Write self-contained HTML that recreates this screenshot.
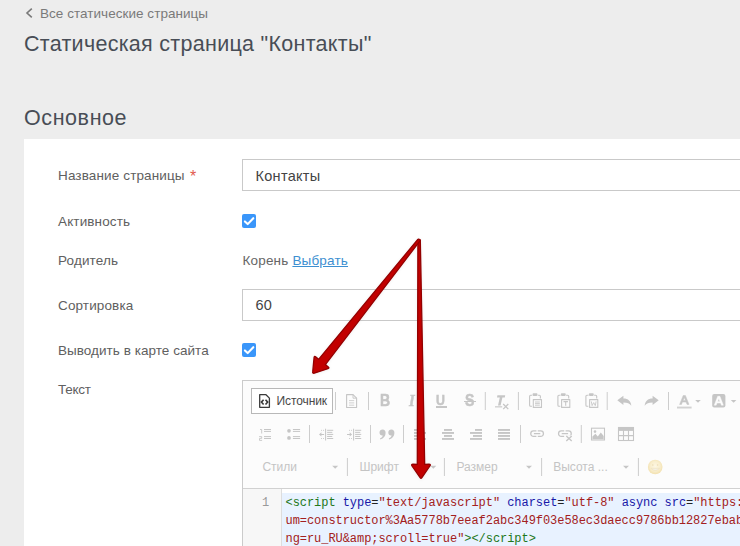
<!DOCTYPE html>
<html lang="ru">
<head>
<meta charset="utf-8">
<title>Статическая страница "Контакты"</title>
<style>
*{box-sizing:border-box;margin:0;padding:0}
html,body{width:740px;height:546px;overflow:hidden;background:#ededed;font-family:"Liberation Sans",sans-serif;color:#555}
.abs{position:absolute;white-space:nowrap}
#back{left:40px;top:6px;font-size:13.5px;line-height:16px;color:#7a7a7a;letter-spacing:.04px}
#h1{left:24px;top:31px;font-size:21.5px;line-height:26px;color:#484d56;letter-spacing:.29px}
#h2{left:24px;top:105px;font-size:21.5px;line-height:26px;color:#484d56;letter-spacing:.58px}
#panel{left:24px;top:139px;width:716px;height:407px;background:#fff}
.lbl{left:58px;font-size:13.5px;line-height:18px;color:#606060;letter-spacing:.13px;margin-top:1px}
.inp{left:242px;width:520px;height:32px;border:1px solid #c9c9c9;background:#fff}
.inp span{position:absolute;left:12.5px;top:7px;font-size:14.5px;line-height:18px;color:#444;letter-spacing:.29px}
.cb{left:242px;width:14px;height:14px;border-radius:2px;background:#3a96fa}
.cb svg{position:absolute;left:0;top:0}
#editor{left:242px;top:380px;width:520px;height:180px;border:1px solid #cbcbcb;background:#fcfcfc}
#tb{left:243px;top:381px;width:500px;height:107px;background:#fcfcfc}
#tbline{left:243px;top:488px;width:500px;height:1px;background:#d1d1d1}
#srcbtn{left:251px;top:388px;width:82px;height:26px;border:1px solid #b8b8b8;background:#fff}
#srctxt{left:276.5px;top:394px;font-size:12px;line-height:14px;color:#484848;letter-spacing:-.1px}
.tbt{font-size:16px;line-height:16px;font-weight:bold;color:#c6c6c6;-webkit-text-stroke:.5px #c6c6c6;transform:scaleX(.88);transform-origin:0 0}
.cmb{font-size:12px;line-height:16px;color:#c4c4c4;top:459px}
#gutter{left:243px;top:489px;width:39px;height:60px;background:#f7f7f7;border-right:1px solid #ddd}
#codew{left:282px;top:489px;width:460px;height:4px;background:#fff}
#code{left:282px;top:493px;width:460px;height:60px;background:#e8f2ff}
.ln{font-family:"Liberation Mono",monospace;font-size:12px;line-height:18px;color:#999}
.cl{font-family:"Liberation Mono",monospace;font-size:12px;letter-spacing:-.05px;line-height:18px;color:#a32020;left:285.5px}
.tg{color:#22771a}.at{color:#1818a8}.st{color:#a32020}.eq{color:#222}
#ov{left:0;top:0}
</style>
</head>
<body>
<div class="abs" id="back">Все статические страницы</div>
<svg class="abs" style="left:24px;top:7px" width="12" height="12" viewBox="0 0 12 12"><path d="M7.8 1.6 L3 6 L7.8 10.4" fill="none" stroke="#7a7a7a" stroke-width="1.6"/></svg>
<div class="abs" id="h1">Статическая страница "Контакты"</div>
<div class="abs" id="h2">Основное</div>

<div class="abs" id="panel"></div>

<div class="abs lbl" style="top:166px">Название страницы <span style="color:#e25a4e;font-size:16px;line-height:10px;position:relative;top:1.5px;left:1.5px">*</span></div>
<div class="abs inp" style="top:159px"><span>Контакты</span></div>

<div class="abs lbl" style="top:212px">Активность</div>
<div class="abs cb" style="top:214px"><svg width="14" height="14" viewBox="0 0 14 14"><path d="M2.9 7.4 L5.7 10.1 L11.3 4.2" fill="none" stroke="#fff" stroke-width="2.1" stroke-linecap="round" stroke-linejoin="round"/></svg></div>

<div class="abs lbl" style="top:251px">Родитель</div>
<div class="abs lbl" style="left:242.5px;top:251px;color:#666;letter-spacing:.18px">Корень <span style="color:#3d8fd1;text-decoration:underline">Выбрать</span></div>

<div class="abs lbl" style="top:296px">Сортировка</div>
<div class="abs inp" style="top:289px"><span style="top:6px">60</span></div>

<div class="abs lbl" style="top:341px;letter-spacing:.04px">Выводить в карте сайта</div>
<div class="abs cb" style="top:343px"><svg width="14" height="14" viewBox="0 0 14 14"><path d="M2.9 7.4 L5.7 10.1 L11.3 4.2" fill="none" stroke="#fff" stroke-width="2.1" stroke-linecap="round" stroke-linejoin="round"/></svg></div>

<div class="abs lbl" style="top:380px;letter-spacing:-.25px">Текст</div>

<div class="abs" id="editor"></div>
<div class="abs" id="tb"></div>
<div class="abs" id="tbline"></div>
<div class="abs" id="srcbtn"></div>
<div class="abs" id="srctxt">Источник</div>

<div class="abs tbt" style="left:380.2px;top:392.6px">B</div>
<div class="abs tbt" style="left:409.2px;top:392.6px;font-style:italic;font-family:'Liberation Serif',serif;font-size:16.5px">I</div>
<div class="abs tbt" style="left:436px;top:392.3px;font-size:14px">U</div>
<div class="abs" style="left:436.2px;top:406.4px;width:10.6px;height:1.2px;background:#c6c6c6"></div>
<div class="abs tbt" style="left:464.6px;top:392.6px">S</div>
<div class="abs" style="left:463.6px;top:400.6px;width:12.4px;height:1.2px;background:#c6c6c6"></div>

<div class="abs cmb" style="left:262.4px">Стили</div>
<div class="abs cmb" style="left:359.4px">Шрифт</div>
<div class="abs cmb" style="left:456.4px">Размер</div>
<div class="abs cmb" style="left:553.2px">Высота ...</div>

<div class="abs" id="gutter"></div>
<div class="abs" id="codew"></div>
<div class="abs" id="code"></div>
<div class="abs ln" style="left:262px;top:494px">1</div>
<div class="abs cl" style="top:494px"><span class="tg">&lt;script</span> <span class="at">type</span><span class="eq">=</span><span class="st">"text/javascript"</span> <span class="at">charset</span><span class="eq">=</span><span class="st">"utf-8"</span> <span class="at">async</span> <span class="at">src</span><span class="eq">=</span><span class="st">"htt<i></i>ps:</span></div>
<div class="abs cl" style="top:512px">um=constructor%3Aa5778b7eeaf2abc349f03e58ec3daecc9786bb12827ebab1c2d3e4f5a6b7c8d9</div>
<div class="abs cl" style="top:530px">ng=ru_RU&amp;amp;scroll=true"<span class="tg">&gt;&lt;/script&gt;</span></div>

<svg class="abs" id="ov" width="740" height="546" viewBox="0 0 740 546">
<defs><radialGradient id="sm" cx="50%" cy="45%" r="55%"><stop offset="0" stop-color="#fdf7e4"/><stop offset="0.6" stop-color="#f9eecd"/><stop offset="1" stop-color="#f2e0ae"/></radialGradient><filter id="sh" x="-20%" y="-20%" width="140%" height="140%"><feDropShadow dx="0" dy="0.5" stdDeviation="1.6" flood-color="#000" flood-opacity="0.07"/></filter></defs>
<g fill="none" stroke="#3a3a3a" stroke-width="1.3" stroke-linejoin="round">
<path d="M259.7 394.7 H266 L269.4 398.1 V407.3 H259.7 Z"/>
<path d="M263.6 399.7 L261.4 402.1 L263.6 404.5 M265.5 399.7 L267.7 402.1 L265.5 404.5" stroke-width="1.6" stroke-linejoin="miter"/></g>
<rect x="335.0" y="392" width="1" height="18" fill="#cdcdcd"/>
<rect x="368.0" y="392" width="1" height="18" fill="#cdcdcd"/>
<rect x="484.8" y="392" width="1" height="18" fill="#cdcdcd"/>
<rect x="517.9" y="392" width="1" height="18" fill="#cdcdcd"/>
<rect x="606.7" y="392" width="1" height="18" fill="#cdcdcd"/>
<rect x="668.0" y="392" width="1" height="18" fill="#cdcdcd"/>
<g fill="none" stroke="#c6c6c6" stroke-width="1.1" stroke-linejoin="round">
<path d="M346.6 394.6 H353 L356.6 398.2 V407.5 H346.6 Z"/><path d="M353 394.6 V398.2 H356.6" stroke-width="0.9"/>
<path d="M349 400.6 H354.2 M349 402.9 H354.2 M349 405.2 H354.2" stroke-width="0.8"/></g>
<g fill="#c6c6c6"><path d="M497.4 395.3 H505.2 L504.8 397.4 H502.4 L500.6 405.6 H498 L499.8 397.4 H497 Z"/>
<rect x="495" y="406.3" width="7.2" height="1.1"/>
<path d="M503.2 404 L508.3 409.1 M508.3 404 L503.2 409.1" stroke="#c6c6c6" stroke-width="1.3" fill="none"/></g>
<g fill="none" stroke="#c6c6c6" stroke-width="1.1" stroke-linejoin="round"><path d="M532 406.2 H530.6 Q529.6 406.2 529.6 405.2 V396.2 Q529.6 395.2 530.6 395.2 H532.2 M537.8 395.2 H539.4 Q540.4 395.2 540.4 396.2 V398.4"/><rect x="532.6" y="393.3" width="4.8" height="2.6" rx="0.8" fill="#c6c6c6" stroke="none"/><rect x="533.3" y="399.6" width="8.2" height="7.8"/><path d="M535 402 H539.8 M535 403.6 H539.8 M535 405.2 H539.8" stroke-width="0.9"/></g>
<g fill="none" stroke="#c6c6c6" stroke-width="1.1" stroke-linejoin="round"><path d="M560.3 406.2 H558.9 Q557.9 406.2 557.9 405.2 V396.2 Q557.9 395.2 558.9 395.2 H560.5 M566.0999999999999 395.2 H567.6999999999999 Q568.6999999999999 395.2 568.6999999999999 396.2 V398.4"/><rect x="560.9" y="393.3" width="4.8" height="2.6" rx="0.8" fill="#c6c6c6" stroke="none"/><rect x="561.5999999999999" y="399.6" width="8.2" height="7.8"/><path d="M563.5 401.6 H567.9 M565.6999999999999 401.6 V405.8" stroke-width="1.1"/></g>
<g fill="none" stroke="#c6c6c6" stroke-width="1.1" stroke-linejoin="round"><path d="M588.3 406.2 H586.9 Q585.9 406.2 585.9 405.2 V396.2 Q585.9 395.2 586.9 395.2 H588.5 M594.0999999999999 395.2 H595.6999999999999 Q596.6999999999999 395.2 596.6999999999999 396.2 V398.4"/><rect x="588.9" y="393.3" width="4.8" height="2.6" rx="0.8" fill="#c6c6c6" stroke="none"/><rect x="589.5999999999999" y="399.6" width="8.2" height="7.8"/><path d="M591.3 401.4 L592.0999999999999 405.6 L593.6999999999999 402.6 L595.3 405.6 L596.0999999999999 401.4" stroke-width="0.9"/></g>
<path fill="#c6c6c6" d="M617.3 400.3 L623.4 395.8 V398.6 C628.2 398.6 631 401.2 631.3 405.8 C629.6 403.4 627.4 402.4 623.4 402.4 V405 Z"/>
<path fill="#c6c6c6" d="M658.7 400.3 L652.6 395.8 V398.6 C647.8 398.6 645 401.2 644.7 405.8 C646.4 403.4 648.6 402.4 652.6 402.4 V405 Z"/>
<path fill="#c6c6c6" stroke="#c6c6c6" stroke-width="0.5" stroke-linejoin="round" d="M683.2 395.5 H685.4 L689 404.4 H687 L686.1 402.1 H682.4 L681.5 404.4 H679.6 Z M684.3 397.6 L683.1 400.5 H685.5 Z"/><rect x="677" y="406.6" width="14.6" height="1.9" fill="#d2d2d2"/>
<path fill="#c6c6c6" d="M695.2 399.9 H700.8 L698 402.8 Z"/>
<rect x="712.2" y="394" width="13.2" height="13.6" rx="2" fill="#c6c6c6"/><path fill="#fcfcfc" stroke="#fcfcfc" stroke-width="0.4" stroke-linejoin="round" d="M717.7 396.3 H719.9 L723.4 405.2 H721.4 L720.6 403.1 H717 L716.2 405.2 H714.2 Z M718.8 398.6 L717.7 401.4 H719.9 Z"/>
<path fill="#c6c6c6" d="M730.8 399.9 H736.4 L733.6 402.8 Z"/>
<rect x="309.0" y="425" width="1" height="18" fill="#cdcdcd"/>
<rect x="370.0" y="425" width="1" height="18" fill="#cdcdcd"/>
<rect x="403.0" y="425" width="1" height="18" fill="#cdcdcd"/>
<rect x="520.0" y="425" width="1" height="18" fill="#cdcdcd"/>
<rect x="580.8" y="425" width="1" height="18" fill="#cdcdcd"/>
<g fill="#c6c6c6"><rect x="264" y="429" width="7" height="1"/><rect x="264" y="430.9" width="7" height="1"/><rect x="264" y="436.1" width="7" height="1"/><rect x="264" y="438" width="7" height="1"/></g>
<g fill="none" stroke="#c6c6c6" stroke-width="0.9"><path d="M260 429.5 H261.7 V433.5"/>
<path d="M259.1 436.6 H261.7 V438.4 H259.5 V440.4 H262.1"/></g>
<g fill="#c6c6c6"><circle cx="289" cy="430.8" r="1.85"/><circle cx="289" cy="437.9" r="1.85"/>
<rect x="292.9" y="429" width="7.2" height="1"/><rect x="292.9" y="430.9" width="7.2" height="1"/><rect x="292.9" y="436.1" width="7.2" height="1"/><rect x="292.9" y="438" width="7.2" height="1"/></g>
<g fill="#c6c6c6"><rect x="327.10" y="429.80" width="6.1" height="1"/><rect x="327.10" y="431.85" width="5.2" height="1"/><rect x="327.10" y="433.90" width="6.1" height="1"/><rect x="327.10" y="435.95" width="5.2" height="1"/><rect x="327.10" y="438.00" width="6.1" height="1"/><rect x="325.10" y="428.7" width="1" height="11.8"/><rect x="321.10" y="429.85" width="0.9" height="0.9"/><rect x="323.00" y="429.85" width="0.9" height="0.9"/><rect x="321.10" y="438.05" width="0.9" height="0.9"/><rect x="323.00" y="438.05" width="0.9" height="0.9"/><path d="M319.00 434.4 L321.40 432.3 V433.9 H324.10 V434.9 H321.40 V436.5 Z"/></g>
<g fill="#c6c6c6"><rect x="355.10" y="429.80" width="6.1" height="1"/><rect x="355.10" y="431.85" width="5.2" height="1"/><rect x="355.10" y="433.90" width="6.1" height="1"/><rect x="355.10" y="435.95" width="5.2" height="1"/><rect x="355.10" y="438.00" width="6.1" height="1"/><rect x="353.10" y="428.7" width="1" height="11.8"/><rect x="349.10" y="429.85" width="0.9" height="0.9"/><rect x="351.00" y="429.85" width="0.9" height="0.9"/><rect x="349.10" y="438.05" width="0.9" height="0.9"/><rect x="351.00" y="438.05" width="0.9" height="0.9"/><path d="M352.10 434.4 L349.70 432.3 V433.9 H347.00 V434.9 H349.70 V436.5 Z"/></g>
<path fill="#c6c6c6" d="M382.60 429.5 C384.60 429.5 385.60 431 385.60 433 C385.60 436 383.60 438.5 380.40 439.4 L380.00 438.4 C381.60 437.7 382.60 436.7 382.80 435.5 C382.60 435.6 382.40 435.6 382.20 435.6 C380.60 435.6 379.50 434.3 379.50 432.6 C379.50 430.8 380.80 429.5 382.60 429.5 Z"/>
<path fill="#c6c6c6" d="M391.40 429.5 C393.40 429.5 394.40 431 394.40 433 C394.40 436 392.40 438.5 389.20 439.4 L388.80 438.4 C390.40 437.7 391.40 436.7 391.60 435.5 C391.40 435.6 391.20 435.6 391.00 435.6 C389.40 435.6 388.30 434.3 388.30 432.6 C388.30 430.8 389.60 429.5 391.40 429.5 Z"/>
<g fill="#c6c6c6"><rect x="414" y="429" width="7" height="1.9"/><rect x="414" y="432" width="12" height="1.9"/><rect x="414" y="435" width="9" height="1.9"/><rect x="414" y="438" width="12" height="1.9"/></g>
<g fill="#c6c6c6"><rect x="444.0" y="429" width="8" height="1.9"/><rect x="442.0" y="432" width="12" height="1.9"/><rect x="444.0" y="435" width="8" height="1.9"/><rect x="442.0" y="438" width="12" height="1.9"/></g>
<g fill="#c6c6c6"><rect x="475" y="429" width="7" height="1.9"/><rect x="470" y="432" width="12" height="1.9"/><rect x="473" y="435" width="9" height="1.9"/><rect x="470" y="438" width="12" height="1.9"/></g>
<g fill="#c6c6c6"><rect x="498" y="429" width="12" height="1.9"/><rect x="498" y="432" width="12" height="1.9"/><rect x="498" y="435" width="12" height="1.9"/><rect x="498" y="438" width="12" height="1.9"/></g>
<g fill="none" stroke="#c6c6c6" stroke-width="1.3"><path d="M536.40 430.9 H533.50 A2.75 2.75 0 0 0 533.50 436.4 H536.40 M537.80 430.9 H540.70 A2.75 2.75 0 0 1 540.70 436.4 H537.80 M533.90 433.65 H540.30"/></g>
<g fill="none" stroke="#c6c6c6" stroke-width="1.3"><path d="M564.20 430.9 H561.30 A2.75 2.75 0 0 0 561.30 436.4 H564.20 M565.60 430.9 H568.50 A2.75 2.75 0 0 1 568.50 436.4 H565.60 M561.70 433.65 H568.10"/></g>
<rect x="564.8" y="435.4" width="8.6" height="6.6" fill="#fcfcfc"/><path d="M566.3 436 L571.7 440.9 M571.7 436 L566.3 440.9" stroke="#c6c6c6" stroke-width="1.4" fill="none"/>
<rect x="591.5" y="428.2" width="13" height="11.8" fill="none" stroke="#c6c6c6" stroke-width="1.1"/>
<circle cx="595" cy="431.6" r="1.3" fill="#c6c6c6"/><path fill="#c6c6c6" d="M592.4 439.2 V436.6 L595.4 433.8 L597.8 436.4 L600.8 432.4 L603.7 436 V439.2 Z"/>
<g fill="none" stroke="#c6c6c6" stroke-width="1.1"><rect x="618.5" y="427.5" width="15" height="13"/><path d="M623.5 430 V440.5 M628.5 430 V440.5 M618.5 435.6 H633.5"/></g><rect x="618.5" y="427.5" width="15" height="3.4" fill="#c6c6c6"/>
<rect x="346.9" y="458" width="1" height="18" fill="#cdcdcd"/>
<rect x="443.9" y="458" width="1" height="18" fill="#cdcdcd"/>
<rect x="541.1" y="458" width="1" height="18" fill="#cdcdcd"/>
<rect x="637.9" y="458" width="1" height="18" fill="#cdcdcd"/>
<path fill="#c6c6c6" d="M332.2 465.7 H338.2 L335.2 468.8 Z"/>
<path fill="#c6c6c6" d="M430.3 465.7 H436.3 L433.3 468.8 Z"/>
<path fill="#c6c6c6" d="M526.0 465.7 H532.0 L529.0 468.8 Z"/>
<path fill="#c6c6c6" d="M623.0 465.7 H629.0 L626.0 468.8 Z"/>
<circle cx="655.2" cy="467" r="7.3" fill="url(#sm)"/>
<circle cx="652.8" cy="465" r="0.8" fill="#ecdcb4"/><circle cx="657.6" cy="465" r="0.8" fill="#ecdcb4"/>
<path d="M650.9 468.3 Q655.2 472.8 659.5 468.3 Z" fill="#f4efe4" stroke="#ecdcb4" stroke-width="0.5"/>

<g filter="url(#sh)">
<path d="M417.9 240.2 Q419 238.6 420.3 240 L424.7 464.4 L429 464.1 Q431 464.2 429.9 466 L421.9 477.6 Q421 478.9 420.1 477.6 L412 466 Q411 464.2 413 464.2 L417.3 464.4 Z" fill="#c20000" stroke="#930000" stroke-width="1.3" stroke-linejoin="round"/>
<path d="M417.6 239.6 Q419 238.4 420.2 240.6 L325.4 364.6 L328.3 366.9 Q329.7 368.1 327.9 368.7 L314.3 373.2 Q312.4 373.6 312.7 371.9 L314.1 357.4 Q314.4 355.7 315.9 356.9 L318.6 359.3 Z" fill="#c20000" stroke="#930000" stroke-width="1.3" stroke-linejoin="round"/>
</g>

</svg>
</body>
</html>
